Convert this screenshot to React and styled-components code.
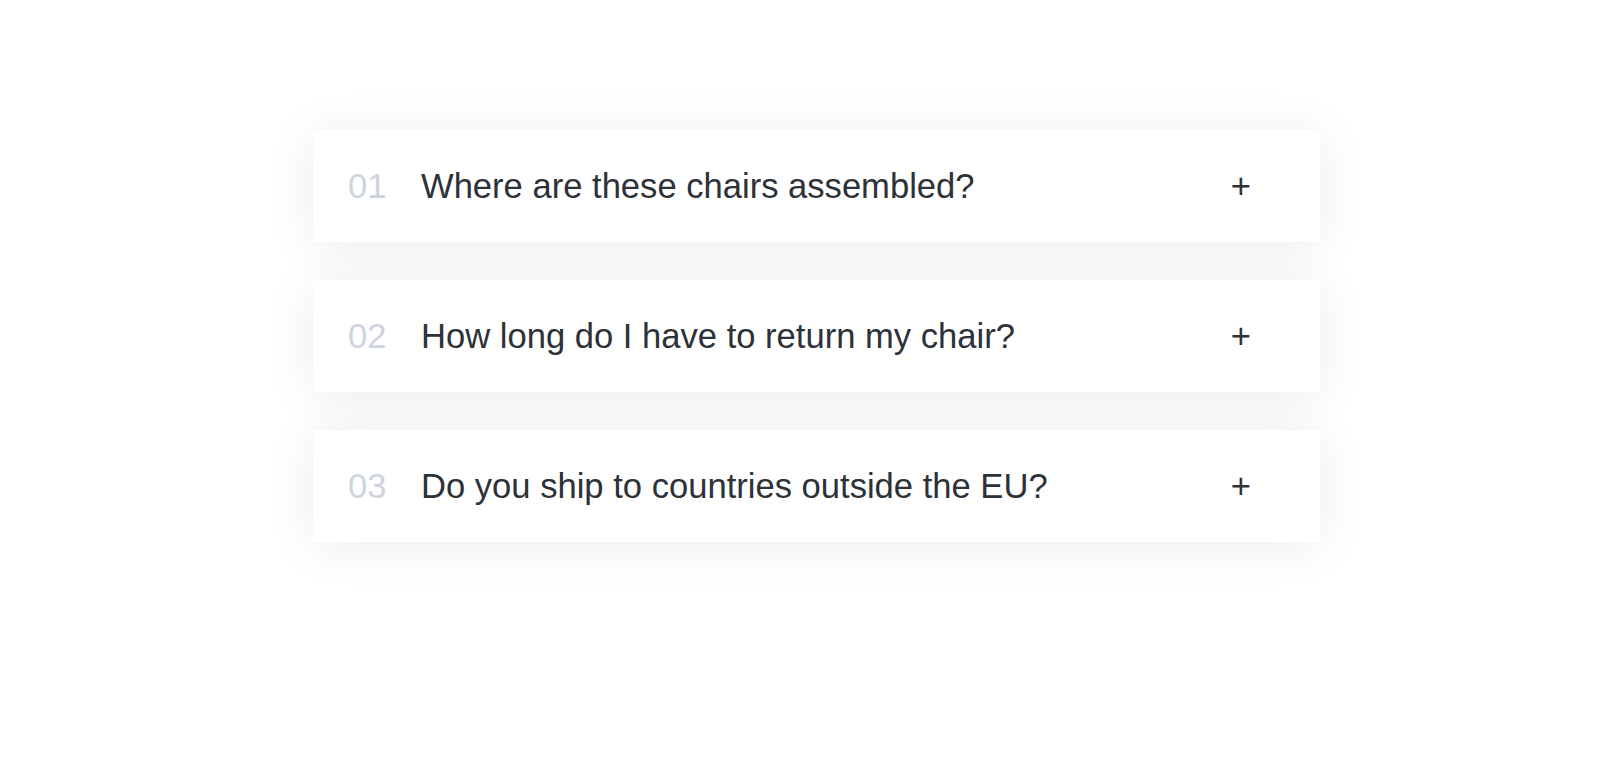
import styled, { createGlobalStyle } from "styled-components";

const questions = [
  { id: "01", text: "Where are these chairs assembled?" },
  { id: "02", text: "How long do I have to return my chair?" },
  { id: "03", text: "Do you ship to countries outside the EU?" },
];

function App() {
  return (
    <>
      <GlobalStyle />
      <Page>
        <List>
          {questions.map((q) => (
            <Item key={q.id}>
              <Number>{q.id}</Number>
              <Question>{q.text}</Question>
              <Toggle>+</Toggle>
            </Item>
          ))}
        </List>
      </Page>
    </>
  );
}

const GlobalStyle = createGlobalStyle`
  * {
    box-sizing: border-box;
  }

  body {
    margin: 0;
    background: #ffffff;
    font-family: "Liberation Sans", Arial, sans-serif;
  }
`;

const Page = styled.div`
  width: 100%;
  height: 770px;
  padding: 130px 0 0 313px;
`;

const List = styled.div`
  display: flex;
  flex-direction: column;
  row-gap: 38px;
  width: 1007px;
`;

const Item = styled.div`
  display: flex;
  align-items: center;
  height: 112px;
  padding: 0 69px 0 35px;
  background: #ffffff;
  box-shadow: 0 4px 50px rgba(0, 0, 0, 0.08);
  font-size: 34.6px;
`;

const Number = styled.span`
  width: 73px;
  color: #cdd4de;
`;

const Question = styled.p`
  flex: 1;
  margin: 0;
  color: #2d3138;
`;

const Toggle = styled.span`
  color: #2d3138;
`;

export default App;
